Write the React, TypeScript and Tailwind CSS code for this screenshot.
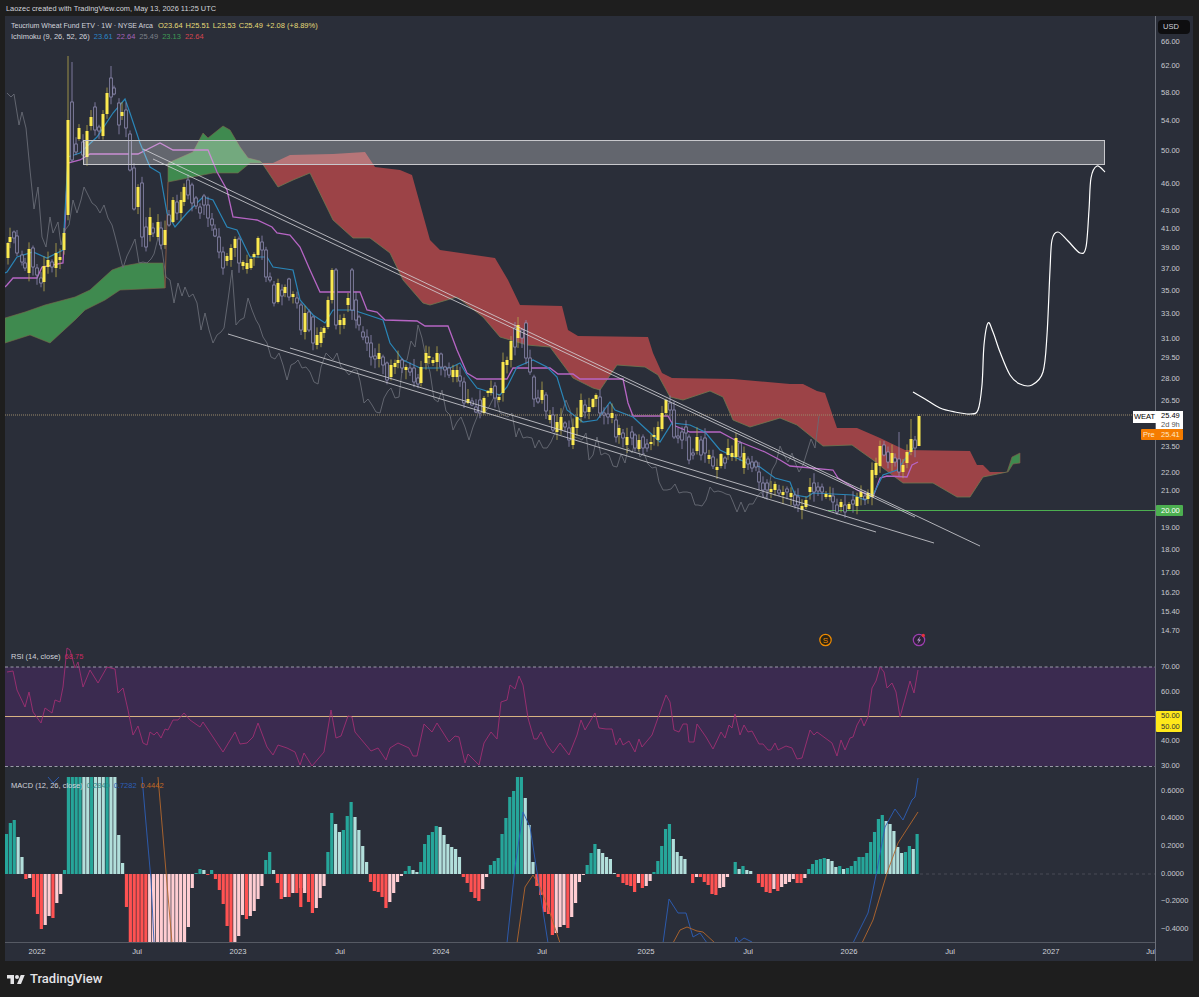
const FONT = "font-['Liberation_Sans',sans-serif]"

// candle bodies read off the chart: x, top, bottom, 1 = up week (solid), 0 = down week (hollow)
const BODIES =
  "8,243,258,1 10,237,242,1 14,232,238,0 17,236,253,0 22,255,262,0 25,263,268,0 29,249,273,1 33,248,267,0 37,268,275,0 41,278,283,0 44,266,282,1 48,260,267,1 52,262,267,0 56,253,268,1 60,257,260,1 64,233,250,1 68,120,215,1 72,102,160,0 76,144,152,0 79,128,139,1 83,142,155,0 87,131,157,1 91,117,126,1 95,107,130,0 99,127,131,0 103,114,136,1 107,93,114,1 111,78,97,0 114,88,94,0 119,103,125,0 122,112,116,1 126,110,128,0 130,134,170,0 134,168,209,0 138,187,207,1 142,183,237,0 146,227,247,0 150,217,235,1 153,228,233,0 158,222,237,1 161,228,245,0 165,230,245,1 169,215,225,0 173,200,222,1 177,202,213,0 181,200,213,1 184,187,202,1 188,180,195,0 192,185,203,0 196,198,206,0 200,207,213,0 204,196,205,0 208,205,218,0 212,219,225,0 215,229,236,0 219,237,252,0 223,252,268,0 227,256,261,1 231,248,260,1 235,239,248,1 239,239,263,0 243,262,266,1 247,263,269,1 251,259,268,1 254,254,257,1 258,238,255,1 262,242,250,0 266,250,277,0 270,277,280,0 274,285,303,0 278,283,302,1 282,290,296,0 285,287,293,1 289,279,297,0 293,294,297,1 297,298,303,0 301,305,330,0 305,313,332,1 309,312,330,0 313,317,343,0 317,335,345,1 321,332,343,1 324,328,333,1 328,300,327,1 332,270,300,1 336,270,325,0 340,320,325,1 344,318,325,1 348,298,305,1 352,270,310,0 356,300,320,0 359,317,325,0 363,332,337,0 367,337,343,0 371,343,357,0 375,356,359,0 379,353,359,1 383,357,365,0 387,363,380,0 391,365,377,1 395,363,367,1 398,360,363,1 402,360,368,0 406,367,370,1 410,368,372,0 414,368,382,0 418,378,384,0 421,367,383,1 426,353,363,1 429,356,358,1 433,360,363,1 437,353,362,1 441,354,367,0 445,367,370,0 449,368,375,0 453,370,377,1 457,370,377,1 460,376,381,0 464,382,403,0 468,399,403,1 472,401,405,0 476,407,412,0 480,400,413,0 484,398,413,1 488,391,393,1 491,388,393,1 495,386,398,0 499,397,400,1 503,362,393,1 507,360,365,1 511,341,360,1 515,328,347,0 518,325,338,1 522,330,338,0 526,323,358,0 530,358,372,0 534,377,399,0 538,398,402,0 542,390,400,1 546,395,411,0 550,415,420,1 553,415,430,0 557,422,432,1 561,417,430,1 565,423,427,0 569,428,440,0 573,427,445,1 577,417,428,1 581,400,417,1 585,405,412,0 589,407,412,1 593,399,407,1 596,395,399,1 600,397,413,0 604,413,415,0 608,414,417,0 612,413,418,1 616,420,437,0 619,428,435,1 623,433,438,0 627,437,445,1 632,432,438,0 635,435,448,0 639,440,449,1 643,437,448,0 647,444,448,0 651,442,444,1 654,435,437,1 658,427,440,1 662,413,429,1 666,400,413,1 670,403,410,0 674,410,437,0 678,436,438,0 682,432,440,0 686,427,433,0 689,437,460,0 693,453,455,0 697,437,451,1 701,440,455,0 705,438,453,0 709,455,459,1 713,457,466,0 717,467,470,1 721,454,466,1 725,458,463,0 728,448,455,1 732,453,457,1 736,438,457,1 740,443,457,0 744,453,468,1 748,459,464,0 752,462,468,0 756,462,467,0 759,472,482,0 763,483,490,0 767,483,490,0 771,489,492,1 775,484,490,1 779,490,493,0 783,492,495,1 787,489,492,0 791,493,497,1 795,495,505,0 798,497,505,0 802,506,510,1 806,500,507,1 810,487,492,1 814,483,492,0 818,487,491,0 822,487,492,0 826,494,497,1 830,495,497,1 833,496,502,0 837,505,512,0 841,502,507,1 845,505,512,0 849,504,509,1 853,500,504,0 857,497,506,1 861,492,497,1 865,496,499,0 868,493,499,1 872,470,497,1 876,463,475,1 880,446,466,1 884,445,455,0 888,452,462,0 892,453,463,1 895,458,462,0 899,459,472,0 903,465,472,1 907,452,463,1 911,439,452,1 915,440,448,0 919,416,446,1"

type Bar = { x: number; top: number; bottom: number; up: boolean; hi: number; lo: number; close: number }

const frac = (n: number) => {
  const v = Math.sin(n * 12.9898) * 43758.5453
  return v - Math.floor(v)
}

const WICK_TOPS: Record<number, number> = { 68: 56, 72: 62, 111: 66, 336: 268, 352: 268, 526: 320, 515: 322, 919: 416, 911: 419, 884: 441, 899: 432 }

const bars: Bar[] = BODIES.split(" ").map((s, i) => {
  const [x, top, bottom, up] = s.split(",").map(Number)
  const hi = WICK_TOPS[x] ?? top - 1 - frac(i) * 9
  const lo = x === 919 ? 446 : bottom + 1 + frac(i + 500) * 9
  return { x, top, bottom, up: up === 1, hi, lo, close: up === 1 ? top : bottom }
})

// chikou is the close drawn 26 weeks back
const chikou = bars.filter((b) => b.x > 105).map((b) => [b.x - 100, b.close])

const pts = (list: number[][]) => list.map((p) => p.join(",")).join(" ")

function smooth(p: number[][]) {
  let d = `M${p[0][0]} ${p[0][1]}`
  for (let i = 0; i < p.length - 1; i++) {
    const a = p[i - 1] ?? p[i]
    const b = p[i]
    const c = p[i + 1]
    const e = p[i + 2] ?? c
    d += ` C${b[0] + (c[0] - a[0]) / 6} ${b[1] + (c[1] - a[1]) / 6} ${c[0] - (e[0] - b[0]) / 6} ${c[1] - (e[1] - b[1]) / 6} ${c[0]} ${c[1]}`
  }
  return d
}

const kijun = [[5,287],[7,285],[13,278],[37,278],[42,267],[63,263],[68,163],[80,160],[90,154],[138,154],[160,143],[173,150],[208,150],[217,172],[227,190],[233,217],[257,220],[272,227],[277,233],[290,235],[300,247],[310,270],[320,292],[360,292],[367,310],[377,312],[385,320],[417,321],[425,326],[448,326],[457,350],[467,373],[477,379],[507,379],[513,368],[550,368],[558,374],[573,374],[580,379],[623,379],[628,403],[633,416],[668,416],[673,425],[690,432],[720,432],[735,440],[765,452],[780,460],[790,466],[833,470],[838,478],[857,490],[873,497],[880,478],[887,476],[907,477],[912,465],[918,462]]

const tenkan = [[5,273],[7,272],[17,257],[33,252],[47,258],[63,250],[68,157],[80,153],[97,137],[113,113],[125,99],[130,113],[140,143],[150,167],[160,173],[167,213],[175,227],[187,213],[203,197],[213,200],[227,227],[237,230],[250,257],[267,257],[273,267],[293,270],[300,300],[313,315],[325,323],[333,310],[353,310],[383,320],[390,343],[403,360],[420,368],[450,368],[460,363],[467,375],[477,388],[500,395],[507,387],[517,367],[533,360],[547,367],[557,377],[567,410],[583,422],[597,420],[610,402],[615,410],[633,417],[647,430],[660,442],[672,423],[690,425],[705,432],[720,450],[745,462],[760,467],[775,478],[790,482],[795,495],[807,497],[813,493],[853,495],[865,500],[873,495],[883,475],[897,470],[913,448]]

const greenA = [[5,318],[25,312],[45,305],[75,297],[90,290],[112,270],[123,266],[140,263],[163,263],[165,288],[120,290],[105,300],[85,310],[75,320],[50,343],[30,335],[5,343]]
const greenB = [[168,163],[193,152],[203,133],[208,138],[223,126],[230,130],[240,147],[248,158],[260,161],[262,163],[250,163],[238,173],[213,173],[168,182]]
const redTop = [[262,163],[273,163],[290,155],[333,154],[365,152],[375,167],[400,170],[412,175],[430,240],[440,250],[495,258],[508,280],[520,305],[562,306],[568,330],[578,336],[648,337],[653,353],[662,373],[672,378],[733,379],[790,384],[803,384],[817,391],[825,393],[837,428],[857,428],[880,438],[905,450],[970,451],[977,465],[983,465],[990,472],[1007,472]]
const redBottom = [[262,163],[278,187],[293,180],[310,173],[333,220],[353,238],[370,238],[390,253],[403,280],[423,303],[430,305],[457,297],[483,317],[500,337],[527,345],[550,347],[573,378],[593,388],[600,390],[617,365],[645,367],[658,375],[670,397],[683,400],[692,397],[710,391],[723,397],[733,420],[750,427],[760,424],[780,418],[797,425],[823,446],[852,445],[873,460],[883,468],[903,483],[933,483],[957,497],[970,497],[983,477],[1007,472]]
const greenC = [[1007,472],[1012,457],[1020,453],[1020,463],[1013,464],[1008,472]]

const drawn = [[913,392],[925,399],[940,408],[955,412],[970,414],[978,410],[982,385],[984,345],[988,323],[993,332],[1000,352],[1010,375],[1020,384],[1032,385],[1043,372],[1047,335],[1050,270],[1052,240],[1058,232],[1068,241],[1080,253],[1086,247],[1089,210],[1091,178],[1097,166],[1105,172]]

const rsi = [[7,672],[13,671],[17,690],[25,707],[29,692],[33,712],[41,723],[45,708],[52,713],[55,700],[60,702],[63,687],[67,648],[70,650],[75,668],[78,662],[83,687],[90,670],[98,683],[107,667],[115,669],[118,693],[123,688],[128,710],[133,735],[138,726],[143,743],[147,745],[150,732],[154,735],[157,732],[161,738],[165,729],[168,730],[173,720],[178,720],[184,713],[190,720],[200,727],[203,722],[213,737],[223,752],[235,732],[240,744],[247,743],[253,737],[258,723],[267,747],[273,755],[278,745],[287,748],[295,752],[300,765],[304,753],[312,766],[324,752],[331,710],[336,738],[341,736],[348,716],[352,717],[355,732],[371,751],[378,748],[386,760],[390,748],[398,743],[409,748],[413,756],[417,756],[424,724],[432,732],[437,723],[449,742],[455,736],[459,737],[465,763],[468,754],[479,765],[484,743],[491,732],[497,739],[501,702],[507,700],[510,685],[515,689],[519,676],[523,685],[528,718],[534,739],[537,739],[541,732],[547,745],[553,753],[560,743],[569,755],[577,735],[581,720],[585,730],[595,713],[599,728],[606,729],[612,729],[616,745],[620,738],[623,745],[629,741],[635,752],[639,739],[642,747],[652,735],[666,695],[670,702],[674,730],[679,732],[683,724],[687,724],[689,742],[694,742],[697,724],[706,737],[713,749],[721,732],[725,738],[729,725],[732,728],[735,714],[740,735],[744,725],[748,732],[752,731],[759,744],[763,744],[768,750],[771,750],[775,743],[778,750],[786,746],[792,748],[797,759],[802,758],[810,730],[814,735],[817,732],[832,743],[837,756],[841,740],[845,750],[850,738],[853,737],[857,725],[861,718],[864,726],[868,717],[872,688],[876,681],[880,667],[884,672],[887,688],[892,683],[896,692],[900,717],[910,681],[914,693],[918,670]]

// macd histogram in pixels from the zero line, chunks of consecutive weeks: start x, then heights
const HIST: [number, number[]][] = [
  [6.5, [40,51,54,37,17,-5,-4,-23,-40,-55,-51,-42,-44,-29,-20,4,120,140,160,180,170,160,170,165,160,150,155,150,140,39,11,-33,-90,-100,-110,-120,-130,-125,-120,-115,-110,-105,-100,-95,-90,-85,-80,-53,-14,1,5,4,-1,4,-5,-16,-30,-52,-75,-72,-62,-41,-45,-42,-37,-25,-12,14,22,4,-9,-25,-23,-23,-19,-19,-14,-19]],
  [300.8, [-33,-19,-28,-39,-34,-24,-12,22,61,50,42,44,58,72,57,44,28,12,-8,-17,-18,-23,-34,-28,-19,-8,-2,3,8,4,2,12,30,39,42,48,47,39,30,27,25,17,-3,-9,-18,-24,-27,-15,-3,9,13,16,40,56,77,83,97,98,76,49,12,-12,-21,-38,-40,-61,-59,-53,-51,-54,-43,-29,-8,-1,9,21,30,25,21,17,15,1,-3]],
  [623, [-9,-11,-12,-18,-9,-14,-12,-7,2,13,28,45,50,35,22,18,15,0,-9,-3,-3,-8,-11,-20,-21,-14,-13,-3,0,12,5,8,4,3,0,-9,-13,-18,-19,-15,-17,-13,-10,-8,-5,-9,-9,-4,5,10,14,15,16,15,13,7,8,5,6,8,13,17,17,21,32,42,55,59,53,50,43,27,21,22,28,25,40]],
]

const hist = HIST.flatMap(([start, vals]) => vals.map((v, i) => ({ x: start + i * 3.87, v, prev: i > 0 ? vals[i - 1] : 0 })))

function histColor(v: number, prev: number) {
  if (v >= 0) return v >= prev ? "#26a69a" : "#b2dfdb"
  return v <= prev ? "#ff5252" : "#ffcdd2"
}

const macdBlue = [
  [[48,777],[53,783],[59,777]],
  [[142,777],[147,835],[151,880],[154,943]],
  [[507,943],[515,867],[523,812],[530,827],[548,943]],
  [[663,943],[669,899],[678,913],[686,913],[693,937],[700,933],[707,943]],
  [[735,943],[736,937],[739,942],[744,938],[752,942]],
  [[853,943],[868,913],[872,895],[877,870],[885,827],[895,809],[903,820],[912,800],[915,797],[918,778]],
]
const macdOrange = [
  [[158,777],[172,943]],
  [[517,943],[525,887],[533,875],[540,887],[550,913],[560,943]],
  [[673,943],[680,930],[687,927],[697,931],[703,932],[715,943]],
  [[862,943],[873,920],[887,873],[898,843],[918,812]],
]

const PRICES: [string, number][] = [["66.00",42],["62.00",66],["58.00",93],["54.00",121],["50.00",151],["46.00",184],["43.00",211],["41.00",229],["39.00",248],["37.00",269],["35.00",291],["33.00",314],["31.00",339],["29.50",358],["28.00",379],["26.50",401],["23.50",447],["22.00",473],["21.00",491],["19.00",528],["18.00",550],["17.00",573],["16.20",593],["15.40",612],["14.70",631],["70.00",667],["60.00",692],["40.00",741],["30.00",766],["0.6000",791],["0.4000",818],["0.2000",846],["0.0000",874],["\u22120.2000",901],["\u22120.4000",929]]

const DATES: [string, number][] = [["2022",37],["Jul",137],["2023",238],["Jul",340],["2024",441],["Jul",542],["2025",646],["Jul",748],["2026",849],["Jul",950],["2027",1051],["Jul",1151]]

function MainPane() {
  return (
    <div className="relative h-[644px] overflow-hidden">
      <svg className="block" width="1150" height="644" viewBox="5 16 1150 644">
        <polygon points={pts(greenA)} fill="#3f8a4f" stroke="#7a6a4a" strokeWidth="0.6" />
        <polygon points={pts(greenB)} fill="#3f8a4f" stroke="#7a6a4a" strokeWidth="0.6" />
        <polygon points={pts(greenC)} fill="#3f8a4f" stroke="#8a5a4a" strokeWidth="0.6" />
        <polygon points={pts([...redTop, ...[...redBottom].reverse()])} fill="#9c4347" />
        <polyline points={pts(redBottom)} fill="none" stroke="#6f7a50" strokeWidth="0.8" />
        <line x1="165" y1="288" x2="168" y2="182" stroke="#8a5a42" strokeWidth="1" />
        <polyline points={pts(chikou)} fill="none" stroke="#686b75" strokeWidth="0.9" />
        <polyline points={pts(kijun)} fill="none" stroke="#b665c4" strokeWidth="1.3" />
        <polyline points={pts(tenkan)} fill="none" stroke="#2a86b8" strokeWidth="1.2" />
        <line x1="5" y1="415" x2="1133" y2="415" stroke="#9a8a6c" strokeWidth="1" strokeDasharray="1 1" />
        <line x1="828" y1="510.5" x2="1155" y2="510.5" stroke="#4caf50" strokeWidth="1" />
        {bars.map((b) => (
          <g key={b.x}>
            <line x1={b.x} x2={b.x} y1={b.hi} y2={b.lo} stroke={b.up ? "#b8aa4c" : "#8f8bb4"} strokeWidth="0.8" />
            {b.up ? (
              <rect x={b.x - 1.5} y={b.top} width="3" height={b.bottom - b.top} fill="#fbe94f" />
            ) : (
              <rect x={b.x - 1.3} y={b.top} width="2.6" height={b.bottom - b.top} fill="#2a2e39" stroke="#9e9ac4" strokeWidth="0.7" />
            )}
          </g>
        ))}
        <rect x="83.5" y="140.5" width="1021" height="24" fill="#ffffff" fillOpacity="0.27" stroke="#c8c8cc" strokeWidth="1" />
        <g stroke="#d6d6da" strokeWidth="0.8">
          <line x1="143" y1="149" x2="980" y2="546" />
          <line x1="153" y1="159" x2="915" y2="517" />
          <line x1="290" y1="348" x2="934" y2="543" />
          <line x1="228" y1="334" x2="876" y2="532" />
        </g>
        <path d={smooth(drawn)} fill="none" stroke="#ffffff" strokeWidth="1.2" />
        <circle cx="825.5" cy="640" r="5.7" fill="#2b2415" stroke="#f08c00" strokeWidth="1.2" />
        <text x="825.5" y="643" textAnchor="middle" fontSize="8" fontFamily="Liberation Sans" fill="#f08c00">S</text>
        <circle cx="919" cy="640" r="5.7" fill="#2d2238" stroke="#9c3fb0" strokeWidth="1.2" />
        <path d="M920.5 636 L917 640.5 L919 640.5 L917.5 644 L921 639.5 L919 639.5 Z" fill="#b59ad0" />
        <circle cx="923.3" cy="635.5" r="1.7" fill="#e5323e" />
      </svg>
      <div className="absolute left-1.5 top-[5px] whitespace-nowrap text-[7.5px] leading-[10.5px] text-[#d1d4dc]">
        <div className="flex">
          <span className="w-[147px] text-[7px]">Teucrium Wheat Fund ETV · 1W · NYSE Arca</span>
          <span className="flex gap-[3px] text-[#e6dc78]">
            <span>O23.64</span>
            <span>H25.51</span>
            <span>L23.53</span>
            <span>C25.49</span>
            <span>+2.08 (+8.89%)</span>
          </span>
        </div>
        <div className="flex gap-1">
          <span>Ichimoku (9, 26, 52, 26)</span>
          <span className="text-[#2a86c8]">23.61</span>
          <span className="text-[#a464b8]">22.64</span>
          <span className="text-[#7d808a]">25.49</span>
          <span className="text-[#3f9a55]">23.13</span>
          <span className="text-[#d64550]">22.64</span>
        </div>
      </div>
    </div>
  )
}

function RsiPane() {
  return (
    <div className="relative h-[110px]">
      <svg className="block overflow-visible" width="1150" height="110" viewBox="5 660 1150 110">
        <rect x="5" y="667" width="1150" height="99" fill="#3b2b50" />
        <line x1="5" x2="1155" y1="667" y2="667" stroke="#b8b6c4" strokeWidth="0.8" strokeDasharray="3 2.5" />
        <line x1="5" x2="1155" y1="766.5" y2="766.5" stroke="#b8b6c4" strokeWidth="0.8" strokeDasharray="3 2.5" />
        <line x1="5" x2="1155" y1="716.5" y2="716.5" stroke="#d8b382" strokeWidth="1" />
        <polyline points={pts(rsi)} fill="none" stroke="#a02f73" strokeWidth="0.9" />
      </svg>
      <div className="absolute left-1.5 top-[-8px] flex gap-1 whitespace-nowrap text-[7.5px] leading-[10.5px] text-[#d1d4dc]">
        <span>RSI (14, close)</span>
        <span className="text-[#c72a62]">68.75</span>
      </div>
    </div>
  )
}

function MacdPane() {
  return (
    <div className="relative h-[173px] overflow-hidden border-b border-[#565a64]">
      <svg className="block" width="1150" height="173" viewBox="5 770 1150 173">
        <line x1="920" x2="1155" y1="874" y2="874" stroke="#50545e" strokeWidth="0.8" strokeDasharray="3 3" />
        {hist.map((h) => {
          const tall = Math.min(Math.abs(h.v), h.v > 0 ? 97 : 70)
          return (
            <rect
              key={h.x}
              x={h.x - 1.6}
              y={h.v > 0 ? 874 - tall : 874}
              width="3.2"
              height={tall}
              fill={histColor(h.v, h.prev)}
            />
          )
        })}
        {macdBlue.map((l, i) => (
          <polyline key={i} points={pts(l)} fill="none" stroke="#2d5fb8" strokeWidth="0.9" />
        ))}
        {macdOrange.map((l, i) => (
          <polyline key={i} points={pts(l)} fill="none" stroke="#b4682c" strokeWidth="0.9" />
        ))}
      </svg>
      <div className="absolute left-1.5 top-[11px] flex gap-1 whitespace-nowrap text-[7.5px] leading-[10.5px] text-[#d1d4dc]">
        <span>MACD (12, 26, close)</span>
        <span className="text-[#2f8f86]">0.2840</span>
        <span className="text-[#2d5fb8]">0.7282</span>
        <span className="text-[#c46a24]">0.4442</span>
      </div>
    </div>
  )
}

function TimeAxis() {
  return (
    <div className="relative h-[17px] text-[7.6px] text-[#d1d4dc]">
      {DATES.map(([label, x]) => (
        <span key={x} className="absolute top-[3px] -translate-x-1/2" style={{ left: x - 5 }}>
          {label}
        </span>
      ))}
    </div>
  )
}

function PriceAxis() {
  return (
    <div className="relative h-[945px] w-[38px] border-l border-[#6c707a] text-[7.5px] text-[#c8cad0]">
      <div className="absolute left-[2px] top-[4px] h-[14px] w-[32px] rounded-sm bg-[#0e0e10] pl-[5px] leading-[14px] text-[#d1d4dc]">USD</div>
      {PRICES.map(([label, y]) => (
        <span key={label + y} className="absolute left-[5px] -translate-y-1/2" style={{ top: y - 16 }}>
          {label}
        </span>
      ))}
      <div className="absolute left-[-23px] top-[395px] flex text-black">
        <span className="h-3 w-[23px] bg-white text-center leading-3">WEAT</span>
        <div className="w-[27px] bg-white pl-[5px] leading-[9px]">
          <div>25.49</div>
          <div className="text-[#555]">2d 9h</div>
        </div>
      </div>
      <div className="absolute left-[-15px] top-[413px] flex h-[11px] w-[42px] rounded-[1px] bg-[#f57c00] leading-[11px] text-[#ffe9c8]">
        <span className="w-[15px] pl-[2px]">Pre</span>
        <span className="pl-[5px]">25.41</span>
      </div>
      <div className="absolute left-0 top-[489px] h-[11px] w-[27px] rounded-[1px] bg-[#4caf50] pl-[5px] leading-[11px] text-white">20.00</div>
      <div className="absolute left-0 top-[695px] w-[26px] rounded-[1px] bg-[#ffe81a] pl-[5px] text-[#333] shadow-sm">
        <div className="leading-[10.5px]">50.00</div>
        <div className="leading-[10.5px]">50.00</div>
      </div>
    </div>
  )
}

export default function App() {
  return (
    <div className={`flex h-[997px] w-[1199px] flex-col overflow-hidden bg-[#1e1e1e] ${FONT}`}>
      <div className="h-4 whitespace-nowrap pl-1.5 text-[7.4px] leading-[17px] text-[#d1d4dc]">
        Laozec created with TradingView.com, May 13, 2026 11:25 UTC
      </div>
      <div className="ml-[5px] flex w-[1188px] bg-[#2a2e39]">
        <div className="w-[1150px]">
          <MainPane />
          <RsiPane />
          <MacdPane />
          <TimeAxis />
        </div>
        <PriceAxis />
      </div>
      <div className="flex items-center gap-[5px] pl-[7px] pt-[10px]">
        <svg width="18" height="12" viewBox="0 0 36 24" fill="#e4e4e6">
          <path d="M14 22H7V11H0V4h14v18zM28 22h-8l7.5-18h8L28 22z" />
          <circle cx="20" cy="8" r="4" />
        </svg>
        <span className="font-['Roboto',sans-serif] text-[13px] font-medium leading-4 text-[#e4e4e6]">TradingView</span>
      </div>
    </div>
  )
}
